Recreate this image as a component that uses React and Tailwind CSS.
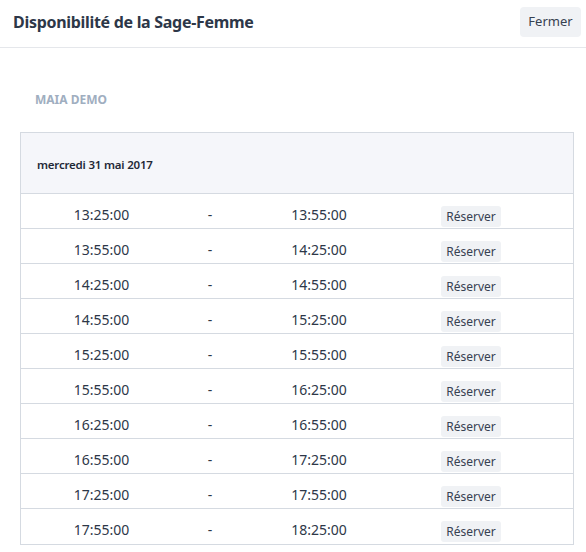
import React from 'react';

const slots = [
    ['13:25:00', '13:55:00'],
    ['13:55:00', '14:25:00'],
    ['14:25:00', '14:55:00'],
    ['14:55:00', '15:25:00'],
    ['15:25:00', '15:55:00'],
    ['15:55:00', '16:25:00'],
    ['16:25:00', '16:55:00'],
    ['16:55:00', '17:25:00'],
    ['17:25:00', '17:55:00'],
    ['17:55:00', '18:25:00'],
];

export default function App() {
    return (
        <div className="w-[586px] h-[552px] overflow-hidden bg-white font-['Noto_Sans',sans-serif] text-[#2d3748]">
            {/* Header */}
            <div className="h-[48px] flex items-start justify-between border-b border-[#e5e7eb] pl-[13px] pr-[5px]">
                <h2 className="mt-[11px] text-[16px] leading-[22px] font-bold text-[#2d3748] tracking-[-0.3px]">
                    Disponibilité de la Sage-Femme
                </h2>
                <button className="mt-[7px] w-[61px] h-[30px] rounded bg-[#f0f2f5] text-[13px] text-[#374151]">
                    Fermer
                </button>
            </div>

            <div className="pl-[20px] pr-[12px]">
                <h3 className="mt-[44px] pl-[15px] text-[12px] leading-[16px] font-bold uppercase text-[#a0aec0]">
                    Maia Demo
                </h3>

                <div className="mt-[24px] border border-[#d5dae1]">
                    <div className="h-[61px] flex items-center pl-[16px] bg-[#f5f6fa] border-b border-[#d5dae1]">
                        <span className="text-[11.5px] font-semibold text-[#1f2937] mt-[4px] tracking-[-0.2px]">mercredi 31 mai 2017</span>
                    </div>

                    {slots.map(([start, end], i) => (
                        <div
                            key={start}
                            className={`h-[35px] grid grid-cols-[161px_56px_162px_1fr] text-[14px] text-[#2d3748] ${i < slots.length - 1 ? 'border-b border-[#d5dae1]' : ''}`}
                        >
                            <div className="text-center pt-[11px] leading-[20px]">{start}</div>
                            <div className="text-center pt-[11px] leading-[20px]">-</div>
                            <div className="text-center pt-[11px] leading-[20px]">{end}</div>
                            <div className="pl-[41px] pt-[11px]">
                                <button className="h-[21px] w-[60px] rounded-[3px] bg-[#f0f2f5] text-[12px] leading-[21px] text-[#374151]">
                                    Réserver
                                </button>
                            </div>
                        </div>
                    ))}
                </div>
            </div>
        </div>
    );
}
